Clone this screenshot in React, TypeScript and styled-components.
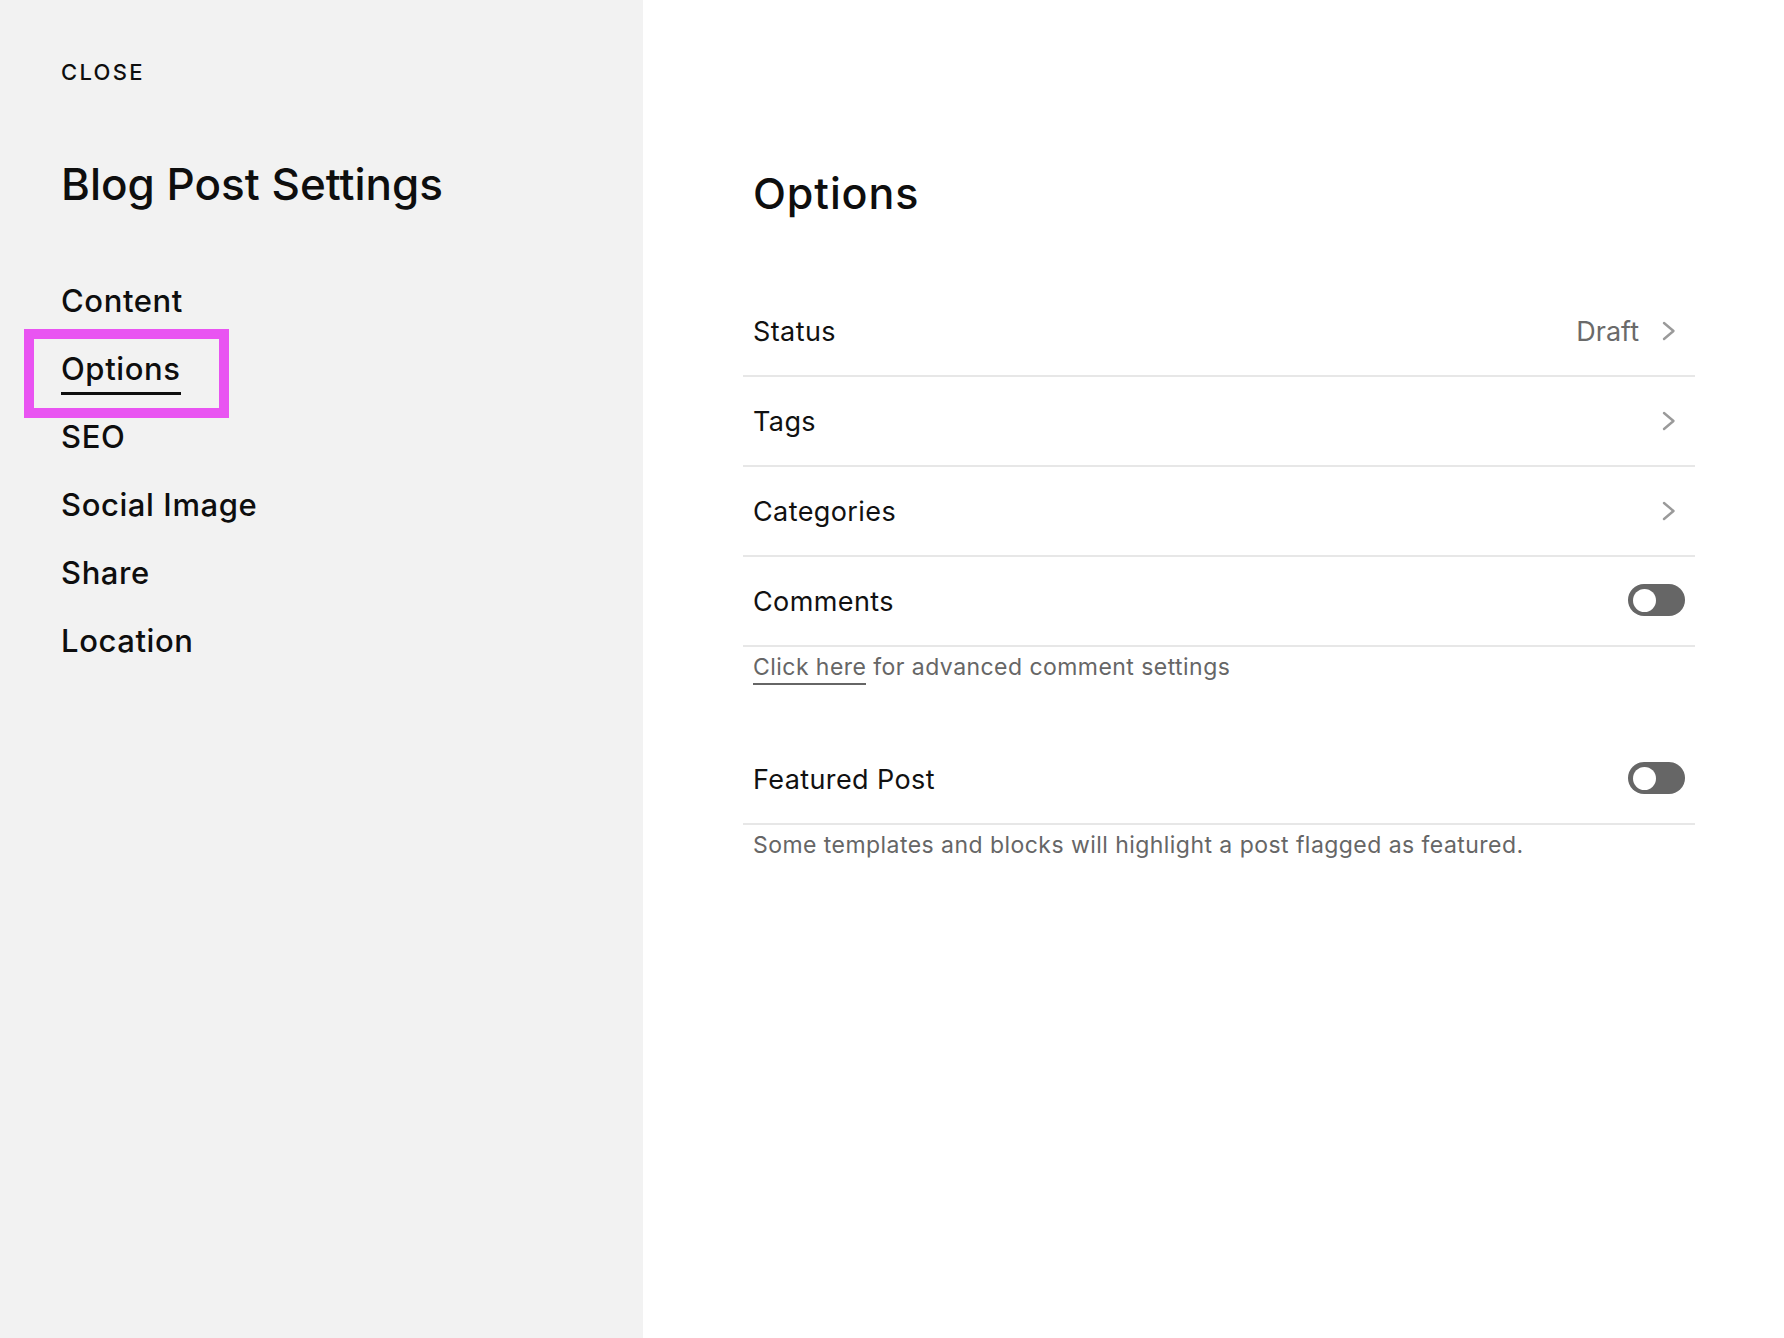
import React from "react";
import styled, { createGlobalStyle } from "styled-components";

const GlobalStyle = createGlobalStyle`
  html, body {
    margin: 0;
    padding: 0;
    background: #ffffff;
  }
  body {
    font-family: Inter, "Noto Sans", "Liberation Sans", sans-serif;
    color: #0e0e0e;
    -webkit-font-smoothing: antialiased;
  }
  *, *::before, *::after { box-sizing: border-box; }
`;

const Page = styled.div`
  display: grid;
  grid-template-columns: 643px 1fr;
  min-height: 1338px;
`;

const Sidebar = styled.aside`
  background: #f2f2f2;
  padding: 59px 0 0 61px;
  display: flex;
  flex-direction: column;
`;

const CloseButton = styled.button`
  align-self: flex-start;
  border: 0;
  background: none;
  padding: 0;
  font-family: inherit;
  font-size: 22px;
  line-height: 26px;
  font-weight: 500;
  letter-spacing: 2.3px;
  color: #0e0e0e;
  text-transform: uppercase;
  cursor: pointer;
`;

const SidebarTitle = styled.h1`
  margin: 73px 0 0;
  font-size: 44px;
  line-height: 53px;
  font-weight: 500;
  letter-spacing: 0;
  color: #0e0e0e;
`;

const Nav = styled.nav`
  display: flex;
  flex-direction: column;
  margin-top: 56px;
`;

const NavItem = styled.a<{ $active?: boolean; $highlight?: boolean }>`
  position: relative;
  align-self: flex-start;
  font-size: 31px;
  line-height: 68px;
  font-weight: 500;
  letter-spacing: 0.6px;
  color: #0e0e0e;
  text-decoration: none;
  cursor: pointer;

  & > span {
    padding-bottom: 5px;
    border-bottom: ${(p) => (p.$active ? "3px solid #0e0e0e" : "0")};
  }

  ${(p) =>
    p.$highlight &&
    `
    &::after {
      content: "";
      position: absolute;
      left: -37px;
      top: -6px;
      width: 205px;
      height: 89px;
      border: 10px solid #e954f2;
      pointer-events: none;
    }
  `}
`;

const Main = styled.main`
  padding: 167px 89px 0 100px;
`;

const Heading = styled.h2`
  margin: 0 0 0 10px;
  font-size: 43px;
  line-height: 52px;
  font-weight: 500;
  letter-spacing: 0.9px;
  color: #0e0e0e;
`;

const List = styled.div`
  margin-top: 68px;
  display: flex;
  flex-direction: column;
`;

const Row = styled.div`
  height: 90px;
  display: flex;
  align-items: center;
  justify-content: space-between;
  padding: 0 10px;
  border-bottom: 2px solid #e7e7e7;
  cursor: pointer;
`;

const Label = styled.span`
  font-size: 27px;
  font-weight: 400;
  letter-spacing: 0.4px;
  color: #111111;
`;

const Trailing = styled.span`
  display: flex;
  align-items: center;
  gap: 22px;
  padding-right: 8px;
`;

const Value = styled.span`
  font-size: 27px;
  font-weight: 400;
  letter-spacing: 0;
  color: #6a6a6a;
`;

const Toggle = styled.span<{ $on?: boolean }>`
  position: relative;
  width: 57px;
  height: 32px;
  margin-top: -2px;
  border-radius: 16px;
  background: #666666;

  &::before {
    content: "";
    position: absolute;
    top: 4.5px;
    left: ${(p) => (p.$on ? "29px" : "4.5px")};
    width: 23px;
    height: 23px;
    border-radius: 50%;
    background: #ffffff;
  }
`;

const Helper = styled.p<{ $gap?: number }>`
  margin: 0;
  padding: 3px 10px 0;
  height: ${(p) => p.$gap ?? 88}px;
  font-size: 23px;
  line-height: 34px;
  font-weight: 400;
  letter-spacing: 0.45px;
  color: #666666;
`;

const HelperLink = styled.a`
  color: #666666;
  text-decoration: none;
  border-bottom: 2px solid #666666;
  padding-bottom: 2px;
  cursor: pointer;
`;

const Chevron = () => (
  <svg width="16" height="20" viewBox="0 0 16 20" fill="none">
    <polyline
      points="3,2 12.5,10 3,18"
      stroke="#9a9a9a"
      strokeWidth="2.4"
      strokeLinecap="round"
      strokeLinejoin="round"
    />
  </svg>
);

const navItems = ["Content", "Options", "SEO", "Social Image", "Share", "Location"];

export default function App() {
  return (
    <>
      <GlobalStyle />
      <Page>
        <Sidebar>
          <CloseButton>Close</CloseButton>
          <SidebarTitle>Blog Post Settings</SidebarTitle>
          <Nav>
            {navItems.map((item) => (
              <NavItem
                key={item}
                $active={item === "Options"}
                $highlight={item === "Options"}
              >
                <span>{item}</span>
              </NavItem>
            ))}
          </Nav>
        </Sidebar>
        <Main>
          <Heading>Options</Heading>
          <List>
            <Row>
              <Label>Status</Label>
              <Trailing>
                <Value>Draft</Value>
                <Chevron />
              </Trailing>
            </Row>
            <Row>
              <Label>Tags</Label>
              <Trailing>
                <Chevron />
              </Trailing>
            </Row>
            <Row>
              <Label>Categories</Label>
              <Trailing>
                <Chevron />
              </Trailing>
            </Row>
            <Row>
              <Label>Comments</Label>
              <Toggle />
            </Row>
            <Helper>
              <HelperLink>Click here</HelperLink> for advanced comment settings
            </Helper>
            <Row>
              <Label>Featured Post</Label>
              <Toggle />
            </Row>
            <Helper $gap={60}>
              Some templates and blocks will highlight a post flagged as featured.
            </Helper>
          </List>
        </Main>
      </Page>
    </>
  );
}
